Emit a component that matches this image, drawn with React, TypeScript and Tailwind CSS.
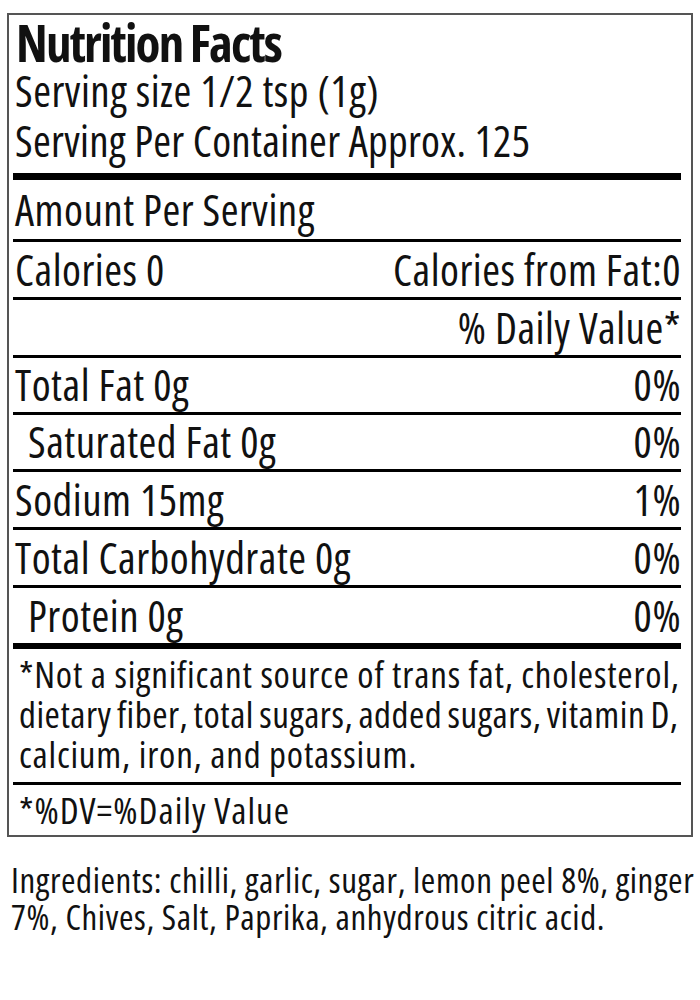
const nutrients = [
  { label: "Total Fat 0g", dv: "0%", indent: false, h: "h-[54px] leading-[54px]" },
  { label: "Saturated Fat 0g", dv: "0%", indent: true, h: "h-[54px] leading-[54px]" },
  { label: "Sodium 15mg", dv: "1%", indent: false, h: "h-[55px] leading-[55px]" },
  { label: "Total Carbohydrate 0g", dv: "0%", indent: false, h: "h-[55px] leading-[55px]" },
  { label: "Protein 0g", dv: "0%", indent: true, h: "h-[55px] leading-[55px]" },
];

function Rule({ className }: { className: string }) {
  return <div className={"w-full bg-black " + className} />;
}

export default function App() {
  return (
    <div className="min-h-screen bg-white pt-[13px] font-['Open_Sans',sans-serif] font-stretch-condensed text-[#111]">
      <div className="ml-[7px] w-[686px] border-2 border-[#555]">
        <div className="ml-[4px] mr-[10px] pt-[3px] tracking-[0.5px]">
          <h1 className="pl-[3px] text-[51px] font-bold leading-[48px] tracking-[-1.8px]">
            Nutrition Facts
          </h1>
          <p className="pl-[2px] text-[43px] leading-[50px]">Serving size 1/2 tsp (1g)</p>
          <p className="pl-[2px] text-[43px] leading-[50px] tracking-[0.3px]">Serving Per Container Approx. 125</p>
          <Rule className="mt-[7px] h-[7px]" />
          <div className="h-[59px] pl-[2px] text-[43px] leading-[59px]">Amount Per Serving</div>
          <Rule className="h-[3px]" />
          <div className="flex h-[55px] justify-between pl-[2px] text-[43px] leading-[55px]">
            <span>Calories 0</span>
            <span>Calories from Fat:0</span>
          </div>
          <Rule className="h-[3px]" />
          <div className="flex h-[55px] justify-end text-[43px] leading-[55px]">
            <span>% Daily Value*</span>
          </div>
          {nutrients.map((n) => (
            <div key={n.label}>
              <Rule className="h-[3px]" />
              <div className={"flex justify-between text-[43px] " + n.h}>
                <span className={n.indent ? "pl-[15px]" : "pl-[2px]"}>{n.label}</span>
                <span>{n.dv}</span>
              </div>
            </div>
          ))}
          <Rule className="h-[6px]" />
          <div className="pb-[8px] pl-[6px] pt-[5px] text-[37px] leading-[40px] tracking-[0.8px]">
            <div className="whitespace-nowrap">*Not a significant source of trans fat, cholesterol,</div>
            <div className="whitespace-nowrap tracking-[0.5px] [word-spacing:-2px]">
              dietary fiber, total sugars, added sugars, vitamin D,
            </div>
            <div className="whitespace-nowrap">calcium, iron, and potassium.</div>
          </div>
          <Rule className="h-[3px]" />
          <div className="h-[50px] pl-[6px] text-[37px] leading-[50px] tracking-[1px]">*%DV=%Daily Value</div>
        </div>
      </div>
      <div className="ml-[11px] mt-[24px] w-[681px] text-[35px] leading-[37px] tracking-[0.6px]">
        <div className="whitespace-nowrap text-justify [text-align-last:justify]">
          Ingredients: chilli, garlic, sugar, lemon peel 8%, ginger
        </div>
        <div className="whitespace-nowrap">7%, Chives, Salt, Paprika, anhydrous citric acid.</div>
      </div>
    </div>
  );
}
